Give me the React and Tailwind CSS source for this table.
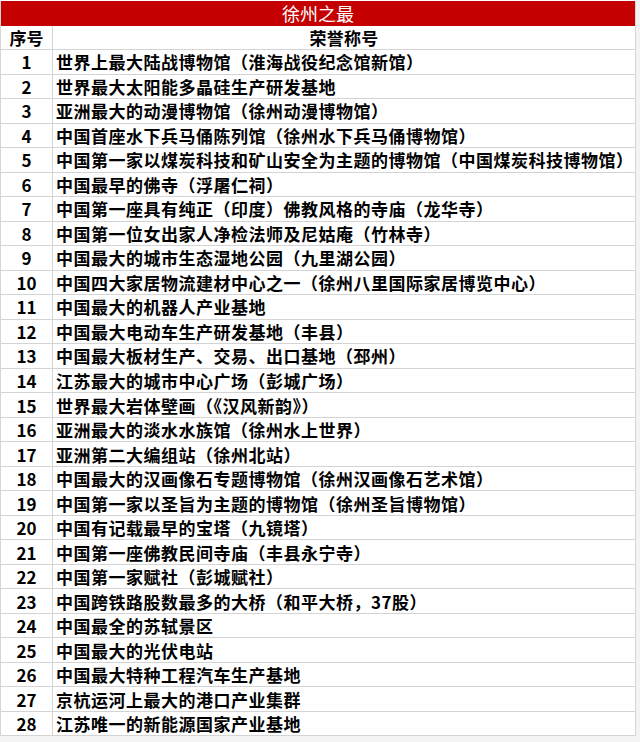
const items = [
  "世界上最大陆战博物馆（淮海战役纪念馆新馆）",
  "世界最大太阳能多晶硅生产研发基地",
  "亚洲最大的动漫博物馆（徐州动漫博物馆）",
  "中国首座水下兵马俑陈列馆（徐州水下兵马俑博物馆）",
  "中国第一家以煤炭科技和矿山安全为主题的博物馆（中国煤炭科技博物馆）",
  "中国最早的佛寺（浮屠仁祠）",
  "中国第一座具有纯正（印度）佛教风格的寺庙（龙华寺）",
  "中国第一位女出家人净检法师及尼姑庵（竹林寺）",
  "中国最大的城市生态湿地公园（九里湖公园）",
  "中国四大家居物流建材中心之一（徐州八里国际家居博览中心）",
  "中国最大的机器人产业基地",
  "中国最大电动车生产研发基地（丰县）",
  "中国最大板材生产、交易、出口基地（邳州）",
  "江苏最大的城市中心广场（彭城广场）",
  "世界最大岩体壁画（《汉风新韵》）",
  "亚洲最大的淡水水族馆（徐州水上世界）",
  "亚洲第二大编组站（徐州北站）",
  "中国最大的汉画像石专题博物馆（徐州汉画像石艺术馆）",
  "中国第一家以圣旨为主题的博物馆（徐州圣旨博物馆）",
  "中国有记载最早的宝塔（九镜塔）",
  "中国第一座佛教民间寺庙（丰县永宁寺）",
  "中国第一家赋社（彭城赋社）",
  "中国跨铁路股数最多的大桥（和平大桥，37股）",
  "中国最全的苏轼景区",
  "中国最大的光伏电站",
  "中国最大特种工程汽车生产基地",
  "京杭运河上最大的港口产业集群",
  "江苏唯一的新能源国家产业基地",
];

const font = { fontFamily: '"Noto Sans CJK SC", "Noto Sans", sans-serif' };

export default function App() {
  return (
    <div className="w-[640px] h-[742px] bg-[#f3f3f3] overflow-hidden" style={font}>
      <div className="w-[636px] pt-px bg-white">
        <div className="w-[636px] border-l border-r border-[#d6d6d6]">
          <div className="h-[24.53px] bg-[#c40000] flex items-center justify-center text-white text-[18px] leading-none">
            徐州之最
          </div>
          <div className="h-[24.53px] flex border-b border-[#d4d4d4] text-[17px] font-bold text-black leading-none">
            <div className="w-[52px] shrink-0 border-r border-[#d4d4d4] flex items-center justify-center">
              序号
            </div>
            <div className="flex-1 flex items-center justify-center tracking-[0.3px]">荣誉称号</div>
          </div>
          {items.map((text, i) => (
            <div
              key={i}
              className="h-[24.53px] flex border-b border-[#d4d4d4] text-[17px] font-bold text-black leading-none"
            >
              <div className="w-[52px] shrink-0 border-r border-[#d4d4d4] flex items-center justify-center">
                {i + 1}
              </div>
              <div className="flex-1 flex items-center pl-[3px] whitespace-nowrap tracking-[0.5px]">
                {text}
              </div>
            </div>
          ))}
        </div>
      </div>
    </div>
  );
}
